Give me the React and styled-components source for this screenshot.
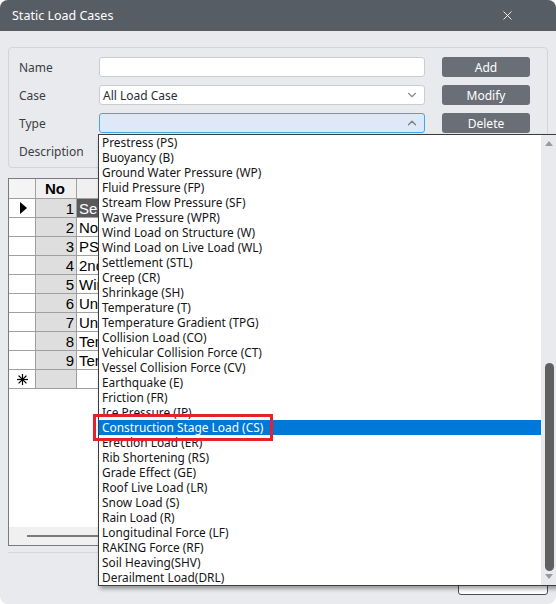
import React from "react";
import styled, { createGlobalStyle } from "styled-components";
import { X, ChevronDown, ChevronUp } from "lucide-react";

const GlobalStyle = createGlobalStyle`
  html, body {
    margin: 0;
    padding: 0;
    background: #ffffff;
  }
  * {
    box-sizing: border-box;
  }
`;

const loadTypes = [
  "Prestress (PS)",
  "Buoyancy (B)",
  "Ground Water Pressure (WP)",
  "Fluid Pressure (FP)",
  "Stream Flow Pressure (SF)",
  "Wave Pressure (WPR)",
  "Wind Load on Structure (W)",
  "Wind Load on Live Load (WL)",
  "Settlement (STL)",
  "Creep (CR)",
  "Shrinkage (SH)",
  "Temperature (T)",
  "Temperature Gradient (TPG)",
  "Collision Load (CO)",
  "Vehicular Collision Force (CT)",
  "Vessel Collision Force (CV)",
  "Earthquake (E)",
  "Friction (FR)",
  "Ice Pressure (IP)",
  "Construction Stage Load (CS)",
  "Erection Load (ER)",
  "Rib Shortening (RS)",
  "Grade Effect (GE)",
  "Roof Live Load (LR)",
  "Snow Load (S)",
  "Rain Load (R)",
  "Longitudinal Force (LF)",
  "RAKING Force (RF)",
  "Soil Heaving(SHV)",
  "Derailment Load(DRL)",
];

const cases = [
  { no: 1, name: "Self Weight" },
  { no: 2, name: "Nominal" },
  { no: 3, name: "PS" },
  { no: 4, name: "2nd" },
  { no: 5, name: "Wind" },
  { no: 6, name: "Uniform" },
  { no: 7, name: "Uniform" },
  { no: 8, name: "Temp" },
  { no: 9, name: "Temp" },
];

const NewRowMark = () => (
  <svg width="11" height="11" viewBox="0 0 11 11">
    <g stroke="#000" strokeWidth="1.2" strokeLinecap="square">
      <line x1="5.5" y1="0.5" x2="5.5" y2="10.5" />
      <line x1="0.5" y1="5.5" x2="10.5" y2="5.5" />
      <line x1="2" y1="2" x2="9" y2="9" />
      <line x1="9" y1="2" x2="2" y2="9" />
    </g>
  </svg>
);

export default function App() {
  return (
    <>
      <GlobalStyle />
      <Window>
        <TitleBar>
          <span>Static Load Cases</span>
          <X size={15} strokeWidth={1.4} />
        </TitleBar>

        <Content>
          <Panel>
            <Label>Name</Label>
            <Field />
            <Button>Add</Button>

            <Label>Case</Label>
            <Field>
              All Load Case
              <ChevronDown size={14} strokeWidth={2} color="#8a8d92" />
            </Field>
            <Button>Modify</Button>

            <Label>Type</Label>
            <Field $focused>
              <span />
              <ChevronUp size={14} strokeWidth={2.4} color="#7c8087" />
            </Field>
            <Button>Delete</Button>

            <Label>Description</Label>
            <Field />
          </Panel>

          <Grid>
            <GridRow $header>
              <RowHead $corner />
              <NoCell $header>No</NoCell>
              <NameCell $header>Name</NameCell>
            </GridRow>
            {cases.map((c) => (
              <GridRow key={c.no}>
                <RowHead>{c.no === 1 ? <Pointer /> : null}</RowHead>
                <NoCell>{c.no}</NoCell>
                <NameCell $selected={c.no === 1}>{c.name}</NameCell>
              </GridRow>
            ))}
            <GridRow>
              <RowHead>
                <NewRowMark />
              </RowHead>
              <NoCell />
              <NameCell />
            </GridRow>
            <GridFiller />
            <HScroll>
              <HThumb />
            </HScroll>
          </Grid>

          <Footer>
            <FooterButton>Close</FooterButton>
          </Footer>
        </Content>

        <DropList>
          <Items>
            {loadTypes.map((t) => (
              <Item key={t} $active={t === "Construction Stage Load (CS)"}>
                {t}
              </Item>
            ))}
          </Items>
          <VScroll>
            <Arrow $up />
            <Track>
              <Thumb />
            </Track>
            <Arrow />
          </VScroll>
        </DropList>

        <Highlight />
      </Window>
    </>
  );
}

//Window
const Window = styled.div`
  position: relative;
  width: 556px;
  height: 604px;
  background: #e9eaee;
  border-radius: 8px;
  overflow: hidden;
  font-family: "Noto Sans", "Open Sans", sans-serif;
  color: #2b2d31;
`;

const TitleBar = styled.div`
  height: 31px;
  background: #575d65;
  color: #ffffff;
  display: flex;
  align-items: center;
  justify-content: space-between;
  padding: 0 41px 0 12px;
  font-size: 12.5px;
`;

const Content = styled.div`
  padding: 16px 8px 0 8px;
  display: flex;
  flex-direction: column;
`;

//Form panel
const Panel = styled.div`
  border: 1px solid #d2d4d9;
  border-radius: 4px;
  padding: 9px 17px 6px 10px;
  display: grid;
  grid-template-columns: 63px 326px 88px;
  grid-auto-rows: 20px;
  column-gap: 17px;
  row-gap: 8px;
  align-items: center;
`;

const Label = styled.div`
  grid-column: 1;
  font-size: 12px;
  color: #3a3d42;
  white-space: nowrap;
`;

const Field = styled.div`
  grid-column: 2;
  height: 20px;
  background: ${(p) => (p.$focused ? "#dde9f9" : "#ffffff")};
  border: 1px solid ${(p) => (p.$focused ? "#4aa3e6" : "#c9ccd1")};
  border-radius: 3px;
  display: flex;
  align-items: center;
  justify-content: space-between;
  padding: 0 5px 0 3px;
  font-size: 12px;
  color: #2b2d31;
`;

const Button = styled.div`
  grid-column: 3;
  height: 20px;
  background: #6a6f77;
  color: #ffffff;
  border-radius: 3px;
  display: flex;
  align-items: center;
  justify-content: center;
  font-size: 12px;
`;

//Load case grid
const Grid = styled.div`
  margin-top: 10px;
  height: 368px;
  border: 1px solid #7b7b7b;
  background: #ffffff;
  display: flex;
  flex-direction: column;
  font-family: "Liberation Sans", Arial, sans-serif;
  font-size: 15px;
  color: #000000;
`;

const GridRow = styled.div`
  display: grid;
  grid-template-columns: 27px 41px 1fr;
  height: ${(p) => (p.$header ? "20px" : "19px")};
  flex-shrink: 0;
`;

const RowHead = styled.div`
  background: ${(p) => (p.$corner ? "#f4f4f4" : "#ffffff")};
  border-right: 1px solid #a0a0a0;
  border-bottom: 1px solid #a0a0a0;
  display: flex;
  align-items: center;
  justify-content: center;
`;

const NoCell = styled.div`
  background: ${(p) => (p.$header ? "#f0f0f0" : "#dedede")};
  border-right: 1px solid #a0a0a0;
  border-bottom: 1px solid #a0a0a0;
  display: flex;
  align-items: center;
  justify-content: ${(p) => (p.$header ? "center" : "flex-end")};
  padding-right: 2px;
  font-weight: ${(p) => (p.$header ? 700 : 400)};
`;

const NameCell = styled.div`
  background: ${(p) => (p.$header ? "#f0f0f0" : p.$selected ? "#5a5a5a" : "#ffffff")};
  color: ${(p) => (p.$selected ? "#ffffff" : "#000000")};
  border-right: 1px solid #a0a0a0;
  border-bottom: 1px solid #a0a0a0;
  display: flex;
  align-items: center;
  justify-content: ${(p) => (p.$header ? "center" : "flex-start")};
  padding-left: 2px;
  font-weight: ${(p) => (p.$header ? 700 : 400)};
  white-space: nowrap;
  overflow: hidden;
`;

const Pointer = styled.span`
  width: 0;
  height: 0;
  border-top: 6px solid transparent;
  border-bottom: 6px solid transparent;
  border-left: 7px solid #000000;
  margin-left: 2px;
`;

const GridFiller = styled.div`
  flex: 1;
`;

const HScroll = styled.div`
  height: 18px;
  background: #f0f0f0;
  display: flex;
  align-items: center;
  padding-left: 18px;
`;

const HThumb = styled.div`
  width: 420px;
  height: 2px;
  background: #7a7a7a;
`;

//Footer
const Footer = styled.div`
  margin-top: 6px;
  border-top: 1px solid #d6d8dc;
  display: flex;
  justify-content: flex-end;
  padding-top: 10px;
`;

const FooterButton = styled.div`
  width: 90px;
  height: 32px;
  background: #ffffff;
  border: 1px solid #4a4d52;
  border-radius: 3px;
  display: flex;
  align-items: center;
  justify-content: center;
  font-size: 12px;
`;

//Drop-down list (overlays the form)
const DropList = styled.div`
  position: absolute;
  left: 98px;
  top: 134px;
  width: 460px;
  height: 452px;
  background: #ffffff;
  border: 1px solid #3c3c3c;
  box-shadow: 2px 3px 4px rgba(0, 0, 0, 0.35);
  display: flex;
`;

const Items = styled.div`
  width: 442px;
  display: flex;
  flex-direction: column;
`;

const Item = styled.div`
  height: 15px;
  line-height: 14px;
  padding-left: 3px;
  font-size: 11.9px;
  white-space: nowrap;
  background: ${(p) => (p.$active ? "#0078d7" : "transparent")};
  color: ${(p) => (p.$active ? "#ffffff" : "#141414")};
`;

const VScroll = styled.div`
  width: 15px;
  background: #e9eaee;
  display: flex;
  flex-direction: column;
  align-items: center;
`;

const Arrow = styled.div`
  width: 0;
  height: 0;
  margin: ${(p) => (p.$up ? "6px 0 0" : "0 0 6px")};
  border-left: 4px solid transparent;
  border-right: 4px solid transparent;
  ${(p) =>
    p.$up ? "border-bottom: 5px solid #9a9a9a;" : "border-top: 5px solid #9a9a9a;"}
`;

const Track = styled.div`
  flex: 1;
  width: 100%;
  display: flex;
  flex-direction: column;
  justify-content: flex-end;
  align-items: center;
  padding: 0 0 3px 2px;
`;

const Thumb = styled.div`
  width: 9px;
  height: 208px;
  background: #606060;
  border-radius: 5px;
`;

//Red annotation box
const Highlight = styled.div`
  position: absolute;
  left: 93px;
  top: 414px;
  width: 180px;
  height: 27px;
  border: 3px solid #e8202b;
`;
